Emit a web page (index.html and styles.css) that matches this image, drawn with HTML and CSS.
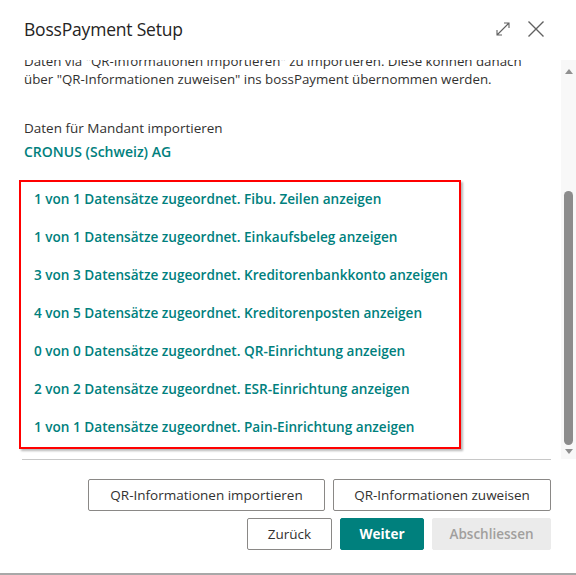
FILE: index.html
```html
<!DOCTYPE html>
<html lang="de">
<head>
<meta charset="utf-8">
<title>BossPayment Setup</title>
<link rel="stylesheet" href="styles.css">
</head>
<body>
<div class="dialog">
  <header class="head">
    <h1 class="title">BossPayment Setup</h1>
    <div class="head-icons">
      <svg class="ico" width="16" height="16" viewBox="0 0 16 16"><path d="M2 14 L14 2 M9 2 H14 V7 M2 9 V14 H7" fill="none" stroke="#616161" stroke-width="1.1"/></svg>
      <svg class="ico" width="18" height="18" viewBox="0 0 18 18"><path d="M1.5 1.5 L16.5 16.5 M16.5 1.5 L1.5 16.5" fill="none" stroke="#616161" stroke-width="1.4"/></svg>
    </div>
  </header>
  <div class="body">
    <div class="viewport">
      <div class="scroll">
        <p class="intro"><span class="line">Daten via "QR-Informationen importieren" zu importieren. Diese können danach</span><span class="line">über "QR-Informationen zuweisen" ins bossPayment übernommen werden.</span></p>
        <div class="label">Daten für Mandant importieren</div>
        <div class="company">CRONUS (Schweiz) AG</div>
        <div class="marked">
          <a class="row">1 von 1 Datensätze zugeordnet. Fibu. Zeilen anzeigen</a>
          <a class="row">1 von 1 Datensätze zugeordnet. Einkaufsbeleg anzeigen</a>
          <a class="row">3 von 3 Datensätze zugeordnet. Kreditorenbankkonto anzeigen</a>
          <a class="row">4 von 5 Datensätze zugeordnet. Kreditorenposten anzeigen</a>
          <a class="row">0 von 0 Datensätze zugeordnet. QR-Einrichtung anzeigen</a>
          <a class="row">2 von 2 Datensätze zugeordnet. ESR-Einrichtung anzeigen</a>
          <a class="row">1 von 1 Datensätze zugeordnet. Pain-Einrichtung anzeigen</a>
        </div>
      </div>
    </div>
    <div class="scrollbar">
      <span class="arrow up"></span>
      <span class="track"><span class="thumb"></span></span>
      <span class="arrow down"></span>
    </div>
  </div>
  <div class="footer">
    <div class="btn-row">
      <button class="btn w-import">QR-Informationen importieren</button>
      <button class="btn w-assign">QR-Informationen zuweisen</button>
    </div>
    <div class="btn-row">
      <button class="btn nav">Zurück</button>
      <button class="btn primary">Weiter</button>
      <button class="btn disabled">Abschliessen</button>
    </div>
  </div>
</div>
</body>
</html>
```

FILE: styles.css
```css
* { box-sizing: border-box; }
html, body { margin: 0; padding: 0; background: #fff; }
body {
  font-family: "Segoe UI", "Open Sans", "Noto Sans", sans-serif;
  color: #323130;
  width: 576px;
  height: 575px;
  overflow: hidden;
}
.dialog {
  width: 576px;
  height: 575px;
  display: flex;
  flex-direction: column;
  border-bottom: 2px solid #a8a8a8;
}
.head {
  height: 60px;
  flex: none;
  display: flex;
  align-items: center;
  justify-content: space-between;
  padding: 0 31px 3px 24px;
}
.title {
  margin: 0;
  font-size: 17.5px;
  font-weight: 400;
  color: #252423;
  letter-spacing: -0.2px;
}
.head-icons { display: flex; align-items: center; gap: 16px; }
.ico { display: block; }

.body {
  flex: none;
  height: 399px;
  display: flex;
}
.viewport {
  flex: 1;
  overflow: hidden;
  padding-left: 24px;
}
.scroll { margin-top: -8px; }
.intro {
  margin: 0;
  font-size: 13.3px;
  line-height: 18px;
  color: #323130;
}
.line { display: block; white-space: nowrap; }
.label {
  margin-top: 30px;
  font-size: 13.5px;
  line-height: 20px;
}
.company {
  margin-top: 4px;
  font-size: 14px;
  line-height: 20px;
  font-weight: 600;
  color: #00807d;
}
.marked {
  margin: 18px 0 0 -5px;
  width: 442px;
  border: 2px solid #ff0000;
  box-shadow: 2px 2px 2px #b9b9b9;
  display: flex;
  flex-direction: column;
  padding-left: 13px;
}
.row {
  height: 38px;
  padding-bottom: 6px;
  display: flex;
  align-items: center;
  font-size: 13.6px;
  font-weight: 600;
  color: #00807d;
  white-space: nowrap;
}
.row:last-child { height: 37px; padding-bottom: 5px; }
.scrollbar {
  flex: none;
  width: 15px;
  background: #f8f8f8;
  display: flex;
  flex-direction: column;
  align-items: center;
}
.arrow {
  flex: none;
  width: 0;
  height: 0;
  border-left: 4px solid transparent;
  border-right: 4px solid transparent;
}
.arrow.up { border-bottom: 5px solid #909090; margin-top: 9px; }
.arrow.down { border-top: 5px solid #909090; margin: 4px 0 5px; }
.track {
  flex: 1;
  display: flex;
  flex-direction: column;
  justify-content: flex-end;
  align-items: center;
}
.thumb {
  width: 9px;
  height: 254px;
  border-radius: 5px;
  background: #8c8c8c;
}
.footer {
  flex: 1;
  margin: 0 25px 0 22px;
  border-top: 1px solid #c8c8c8;
  padding-top: 19px;
  display: flex;
  flex-direction: column;
  align-items: flex-end;
  gap: 7px;
}
.btn-row { display: flex; gap: 8px; }
.btn {
  height: 32px;
  padding: 0;
  border: 1px solid #8a8886;
  border-radius: 2px;
  background: #fff;
  font-family: inherit;
  font-size: 13.5px;
  color: #323130;
  white-space: nowrap;
}
.btn.w-import { width: 237px; }
.btn.w-assign { width: 218px; }
.btn.nav { width: 85px; }
.btn.primary {
  width: 84px;
  background: #00807d;
  border-color: #00807d;
  color: #fff;
  font-weight: 700;
}
.btn.disabled {
  width: 119px;
  background: #ebebeb;
  border-color: #ebebeb;
  color: #a19f9d;
  font-weight: 600;
}
```
